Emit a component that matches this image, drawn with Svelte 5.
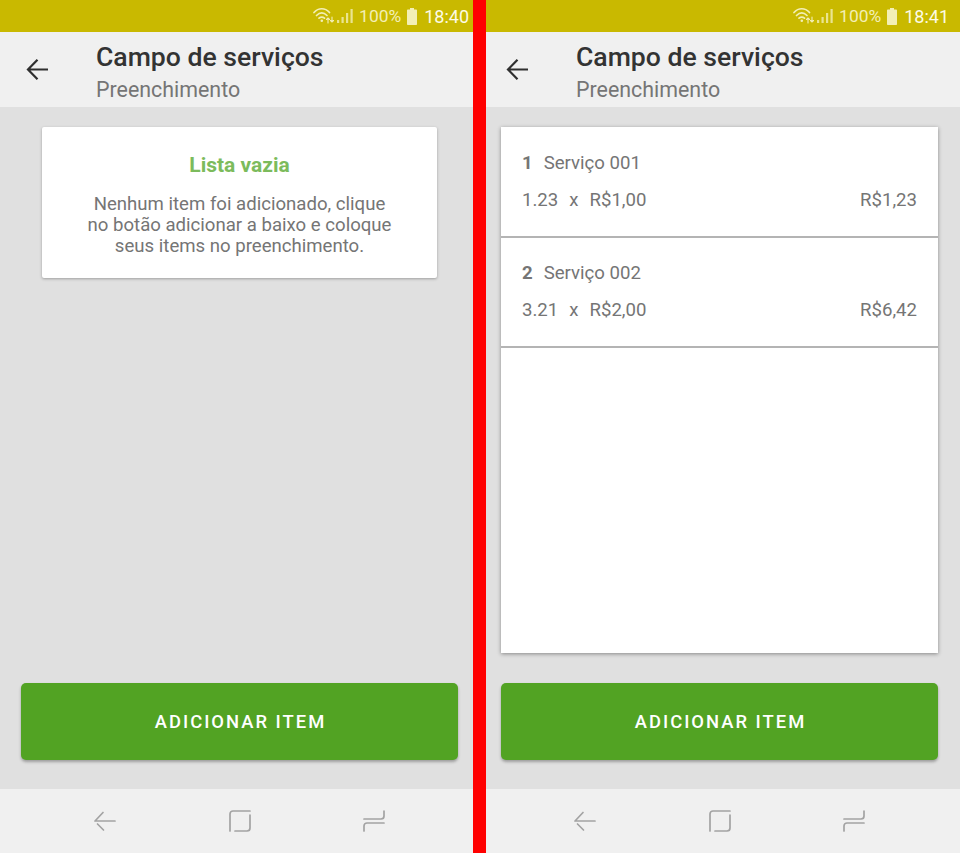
<script lang="ts">
  type Item = { id: number; name: string; qty: string; price: string; total: string };

  const screens: { time: string; items: Item[] }[] = [
    { time: '18:40', items: [] },
    {
      time: '18:41',
      items: [
        { id: 1, name: 'Serviço 001', qty: '1.23', price: 'R$1,00', total: 'R$1,23' },
        { id: 2, name: 'Serviço 002', qty: '3.21', price: 'R$2,00', total: 'R$6,42' }
      ]
    }
  ];
</script>

<div class="page">
  {#each screens as screen}
    <section class="phone">
      <div class="status">
        <svg class="wifi" width="22" height="18" viewBox="0 0 22 18" fill="none" stroke="currentColor" stroke-linecap="round">
          <path d="M1 5.500C5.500 0.500 12 0.500 16.500 5.500" stroke-width="1.700" />
          <path d="M3.500 8.500C7 5 10.500 5 14 8.500" stroke-width="1.700" />
          <path d="M6 11.200C8 9.500 9.500 9.500 11.500 11.200" stroke-width="1.700" />
          <circle cx="8.800" cy="13.800" r="1.300" fill="currentColor" stroke="none" />
          <path d="M15 16v-5M13.500 12.500 15 11l1.500 1.500M19 10v5M17.500 13.500 19 15l1.500-1.500" stroke-width="1.100" />
        </svg>
        <svg class="signal" width="16" height="16" viewBox="0 0 16 16" fill="currentColor">
          <rect x="0" y="12" width="2.200" height="3" opacity="0.8" />
          <rect x="4.500" y="9" width="2.200" height="6" opacity="0.8" />
          <rect x="9" y="5" width="2.200" height="10" opacity="0.8" />
          <rect x="13.500" y="1" width="2.200" height="14" opacity="0.8" />
        </svg>
        <span class="pct">100%</span>
        <svg class="battery" width="10" height="17" viewBox="0 0 10 17" fill="currentColor">
          <path d="M3 0h4v1.500h2.200a.8.8 0 0 1 .8.800V16.200a.8.8 0 0 1-.8.800H.8a.8.8 0 0 1-.8-.8V2.300a.8.8 0 0 1 .8-.8H3z" />
        </svg>
        <span class="time">{screen.time}</span>
      </div>

      <header class="appbar">
        <svg class="back" width="24" height="24" viewBox="0 0 24 24" fill="none" stroke="#2f2f2f" stroke-width="2.200">
          <path d="M23 11.500H3M12.500 1.800l-9.500 9.700 9.500 9.700" />
        </svg>
        <div class="titles">
          <h1>Campo de serviços</h1>
          <p>Preenchimento</p>
        </div>
      </header>

      <main class="content">
        {#if screen.items.length === 0}
          <div class="empty">
            <h2>Lista vazia</h2>
            <p>Nenhum item foi adicionado, clique no botão adicionar a baixo e coloque seus items no preenchimento.</p>
          </div>
        {:else}
          <ul class="list">
            {#each screen.items as item}
              <li>
                <div class="row"><b>{item.id}</b><span>{item.name}</span></div>
                <div class="row values">
                  <span>{item.qty}</span><span>x</span><span>{item.price}</span>
                  <span class="total">{item.total}</span>
                </div>
              </li>
            {/each}
          </ul>
        {/if}
        <button type="button">ADICIONAR ITEM</button>
      </main>

      <nav class="softkeys">
        <svg width="24" height="24" viewBox="0 0 24 24" fill="none" stroke="#a3a3a3" stroke-width="1.700" stroke-linecap="round">
          <path d="M22 12H2M10 3.500 2 12M4.500 15l6 6" />
        </svg>
        <svg width="24" height="24" viewBox="0 0 24 24" fill="none" stroke="#a3a3a3" stroke-width="1.700" stroke-linecap="round">
          <path d="M2 22V5a3 3 0 0 1 3-3h17M22 6v13a3 3 0 0 1-3 3H7" />
        </svg>
        <svg width="24" height="24" viewBox="0 0 24 24" fill="none" stroke="#a3a3a3" stroke-width="1.700" stroke-linecap="round">
          <path d="M22 2v5a3 3 0 0 1-3 3H2M22 14H5a3 3 0 0 0-3 3v5" />
        </svg>
      </nav>
    </section>
  {/each}
  <div class="divider"></div>
</div>

<style>
  :global(body) {
    background: #e0e0e0;
  }

  .page {
    position: relative;
    display: grid;
    grid-template-columns: 480px 480px;
    width: 960px;
    height: 853px;
    overflow: hidden;
    font-family: Roboto, 'Liberation Sans', sans-serif;
  }

  .divider {
    position: absolute;
    top: 0;
    bottom: 0;
    left: 473px;
    width: 13px;
    background: #ff0000;
  }

  .phone {
    display: flex;
    flex-direction: column;
    height: 853px;
    background: #e0e0e0;
  }

  .status {
    display: flex;
    align-items: center;
    justify-content: flex-end;
    height: 32px;
    padding-right: 11px;
    background: #c9b900;
    color: #f3efb5;
  }

  .wifi {
    margin-right: 2px;
  }

  .signal {
    margin-right: 6px;
  }

  .pct {
    font-size: 17.400px;
    margin-right: 6px;
  }

  .battery {
    margin-right: 7px;
  }

  .time {
    font-size: 18px;
    color: #fdfbe6;
  }

  .appbar {
    display: flex;
    align-items: center;
    height: 75px;
    padding-left: 25px;
    background: #f0f0f0;
  }

  .back {
    margin-right: 47px;
    flex: none;
  }

  .titles {
    padding-top: 4px;
  }

  h1 {
    margin: 0;
    font-size: 26.600px;
    line-height: 30px;
    font-weight: 500;
    color: #333;
  }

  .titles p {
    margin: 5px 0 0;
    font-size: 21.400px;
    line-height: 25px;
    color: #757575;
  }

  .content {
    display: flex;
    flex: 1;
    flex-direction: column;
    min-height: 0;
    padding: 20px 22px 29px 21px;
  }

  .empty {
    align-self: center;
    box-sizing: border-box;
    width: 395px;
    height: 151px;
    margin-bottom: auto;
    padding: 25px 42px 0;
    border-radius: 2px;
    background: #fff;
    box-shadow: 0 1px 3px rgba(0, 0, 0, 0.3);
    text-align: center;
  }

  h2 {
    margin: 0 0 16px;
    font-size: 21px;
    line-height: 26px;
    font-weight: 700;
    color: #7cbb5c;
  }

  .empty p {
    margin: 0;
    font-size: 18.600px;
    line-height: 21px;
    color: #757575;
  }

  .list {
    flex: 1;
    margin: 0 0 30px;
    padding: 1px 0 0;
    list-style: none;
    background: #fff;
    box-shadow: 0 1px 4px rgba(0, 0, 0, 0.4);
    color: #757575;
    font-size: 18.600px;
  }

  li {
    box-sizing: border-box;
    height: 110px;
    padding: 24px 21px 0;
    border-bottom: 2px solid #b4b4b4;
  }

  .row {
    display: flex;
    gap: 11px;
    height: 22px;
    align-items: center;
  }

  .row b {
    font-weight: 700;
  }

  .values {
    margin-top: 14.500px;
  }

  .total {
    margin-left: auto;
  }

  button {
    flex: none;
    height: 77px;
    padding: 0 0 0 2px;
    border: 0;
    border-radius: 5px;
    background: #52a323;
    box-shadow: 0 2px 3px rgba(0, 0, 0, 0.3);
    color: #fff;
    font-family: inherit;
    font-size: 18.400px;
    font-weight: 500;
    letter-spacing: 2px;
  }

  .softkeys {
    display: flex;
    align-items: center;
    justify-content: space-between;
    height: 64px;
    padding: 0 94px 0 93px;
    background: #f0f0f0;
  }
</style>
